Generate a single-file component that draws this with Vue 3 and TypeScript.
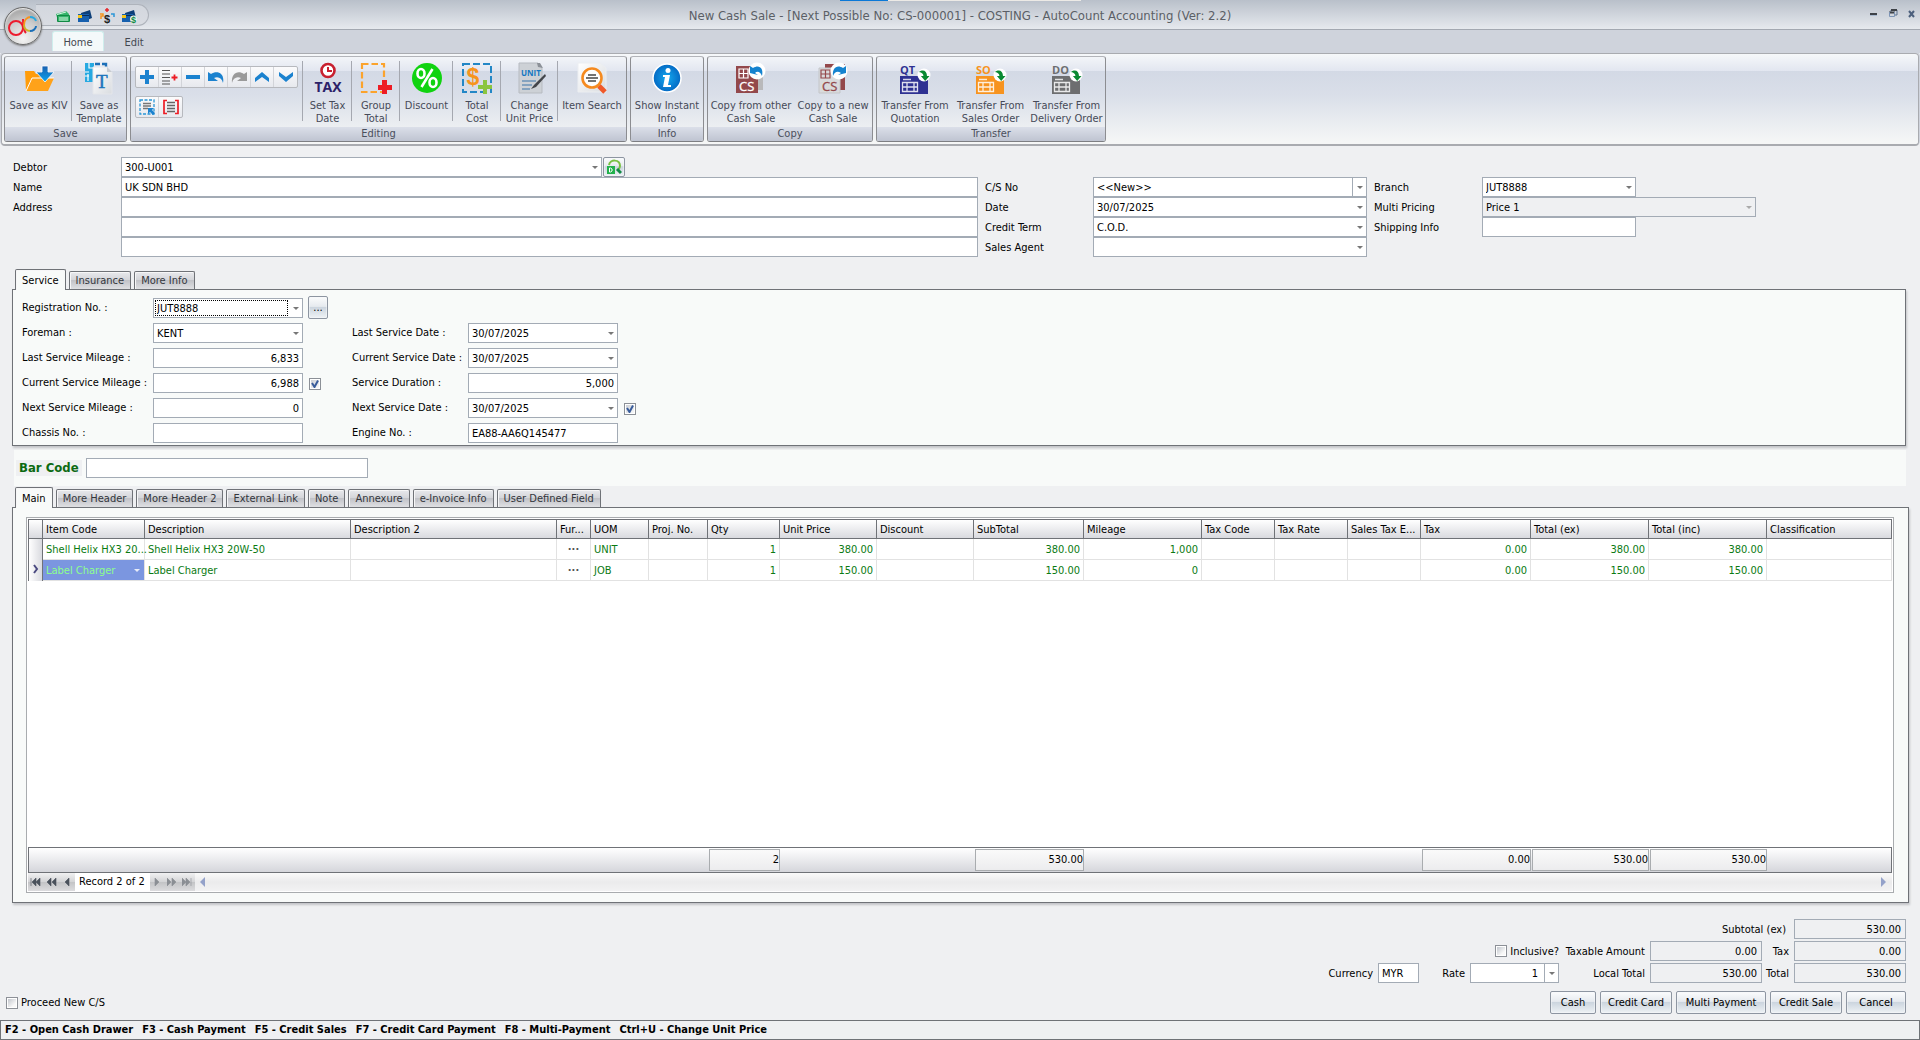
<script setup lang="ts">
import { ref } from 'vue'

interface RibbonButton {
  lines: string[]
  icon: string
  width: number
  divider?: boolean
}
interface RibbonGroup {
  caption: string
  tools?: boolean
  buttons: RibbonButton[]
}
interface Column {
  title: string
  key: string
  width: number
  numeric?: boolean
  total?: string
}
interface ServiceField {
  id: string
  label: string
  value: string
  kind: 'select' | 'text' | 'number'
  focused?: boolean
  more?: boolean
  check?: string
}

const sheet = '<defs><linearGradient id="sheetFill" x1="0" y1="0" x2="1" y2="1"><stop offset="0" stop-color="#ffffff"/><stop offset="1" stop-color="#d9dce0"/></linearGradient></defs>'
const copyArrow = '<circle cx="22" cy="9" r="8.5" fill="#fff"/>'
const transferDoc = (tag: string, color: string): string =>
  `<rect x="1" y="14" width="28" height="18" fill="${color}"/>
   <path d="M4 17.5h8" stroke="#fff" stroke-width="1.5" opacity=".8"/>
   <path d="M3.5 20.5h15v9h-15zM3.5 25h15M8 20.5v9M15 20.5v9" fill="none" stroke="#fff" stroke-width="1.3" opacity=".85"/>
   <circle cx="25" cy="13" r="6.5" fill="#fff"/>
   <path d="M20 10c4-3 8-1 8 4h2.500l-4.300 5-4.300-5h2.500c0-2-1.500-3.500-4.400-4z" fill="#0a8a32"/>
   <text x="1" y="12" font-size="11" font-weight="bold" fill="${color}" font-family="Open Sans, Noto Sans, sans-serif">${tag}</text>`

const icons: Record<string, string> = {
  kiv: `<defs><linearGradient id="kivArrow" x1="0" y1="0" x2="0" y2="1"><stop offset="0" stop-color="#1a5fb0"/><stop offset="1" stop-color="#0aa4ee"/></linearGradient></defs>
    <path d="M2 9h9l2 3h12v5H9L3 29z" fill="#ff9c0a"/><path d="M9 16h22l-6 13H3z" fill="#ffa21a"/><path d="M3 29 9 16h22" fill="none" stroke="#fff" stroke-width="1"/>
    <path d="M19 4h6v6h6l-9 10-9-10h6z" fill="url(#kivArrow)" stroke="#fff" stroke-width=".8"/>`,
  template: `${sheet}<path d="M2 1h9v4h4v3h-4v12H2z" fill="#27a9e1"/><path d="M6 1v5h5M2 10h4M2 14h4M5 12v7" stroke="#fff" stroke-width="1.2" fill="none"/><path d="M12 2h5M19 2h4v4" stroke="#1c6fb8" stroke-width="2.4" fill="none"/>
    <path d="M10 5h14l5 5v22H10z" fill="url(#sheetFill)" stroke="#e4e6ea"/><path d="M24 5l5 5h-5z" fill="#c5cad2"/>
    <text x="13" y="26" font-size="19" fill="#1b75bc" stroke="#1b75bc" stroke-width=".5" font-family="Liberation Serif, serif">T</text>`,
  tax: `<circle cx="16" cy="8.5" r="6.5" fill="#fff" stroke="#c8202f" stroke-width="2.6"/><path d="M16 5v4h4" fill="none" stroke="#c8202f" stroke-width="2"/>
    <text x="16" y="30" font-size="14" font-weight="bold" text-anchor="middle" fill="#2b2168" font-family="Open Sans, Noto Sans, sans-serif">TAX</text>`,
  group: `<rect x="2" y="2" width="22" height="28" fill="none" stroke="#fba32c" stroke-width="2.2" stroke-dasharray="6.5 3"/>
    <path d="M22 18h5v5h5v5h-5v4h-5v-4h-4v-5h4z" fill="#ed1c24"/>`,
  discount: `<circle cx="16" cy="16" r="15" fill="#10d310"/><g fill="none" stroke="#fff" stroke-width="2.6"><ellipse cx="10" cy="11.5" rx="3.5" ry="4.5"/><ellipse cx="22" cy="20.5" rx="3.5" ry="4.5"/><path d="M21.5 7l-11 18"/></g>`,
  cost: `<rect x="2" y="2" width="28" height="28" fill="none" stroke="#2387c6" stroke-width="2" stroke-dasharray="7 3"/>
    <text x="12" y="23" font-size="23" font-weight="bold" text-anchor="middle" fill="#f7941d" font-family="Liberation Sans, sans-serif">$</text>
    <path d="M22 18h4v5h5v4h-5v5h-4v-5h-5v-4h5z" fill="#8bc53f"/>`,
  unit: `<path d="M5 1h19l4 5v25H5z" fill="#cdd1d6" stroke="#b7bbc1"/><path d="M23 1h3l3 5-5-1z" fill="#8c9198"/>
    <text x="7" y="14" font-size="8" font-weight="bold" fill="#1577c2" font-family="Open Sans, sans-serif">UNIT</text>
    <path d="M8 19h14M8 23h10M8 27h8" stroke="#6b93b8" stroke-width="1.3"/><path d="M31 12 20 23l-3 4 5-2 10-11z" fill="#43464b"/>`,
  search: `${sheet}<path d="M2 1h22l6 5v24H2z" fill="url(#sheetFill)" stroke="#eceef1"/>
    <circle cx="16" cy="16" r="9.5" fill="#fdfdfd" stroke="#f58a1f" stroke-width="2.6"/><path d="M23 24l6 6" stroke="#f0592a" stroke-width="5"/><path d="M12 13h8M10 16h12M12 19h8" stroke="#444" stroke-width="1.6"/>`,
  info: `<defs><radialGradient id="infoFill"><stop offset="0" stop-color="#14a9ee"/><stop offset="1" stop-color="#0469c4"/></radialGradient></defs>
    <circle cx="16" cy="16" r="14" fill="url(#infoFill)" stroke="#fff" stroke-width="1.5"/><circle cx="17" cy="8.5" r="2.5" fill="#fff"/><path d="M12 13h7l-2 10h3v2h-8l2-10h-2z" fill="#fff"/>`,
  copyOther: `<path d="M8 4h20v24H8z" fill="#b9b9bb"/><path d="M1 4h22v27H1z" fill="#93484b"/><path d="M4 7h9v9H4zM4 11.5h9M8.5 7v9" fill="none" stroke="#fff" stroke-width="1.2"/>
    <text x="4" y="29" font-size="13" fill="#fff" stroke="#fff" stroke-width=".3" font-family="Open Sans, sans-serif">CS</text>${copyArrow}<path d="M15 11V4l3 2c6-4 11 0 9 8-2-5-5-5-7-3l3 2z" fill="#1583cf"/>`,
  copyNew: `<path d="M8 2h20v26H8z" fill="#93484b"/><path d="M2 6h21v25H2z" fill="#d9dadc" stroke="#c4c6c9"/><path d="M4 8h9v8H4zM4 12h9M8.5 8v8" fill="none" stroke="#93484b" stroke-width="1.2"/>
    <text x="5" y="29" font-size="13" fill="#93484b" stroke="#93484b" stroke-width=".3" font-family="Open Sans, sans-serif">CS</text>${copyArrow}<path d="M29 11V4l-3 2c-6-4-11 0-10 8 2-5 5-5 8-3l-3 2z" fill="#1583cf"/>`,
  qt: transferDoc('QT', '#2e3192'),
  so: transferDoc('SO', '#f7931e'),
  do: transferDoc('DO', '#6d6e70'),
}

const groups: RibbonGroup[] = [
  {
    caption: 'Save',
    buttons: [
      { lines: ['Save as KIV'], icon: 'kiv', width: 67, divider: true },
      { lines: ['Save as', 'Template'], icon: 'template', width: 54 },
    ],
  },
  {
    caption: 'Editing',
    tools: true,
    buttons: [
      { lines: ['Set Tax', 'Date'], icon: 'tax', width: 49, divider: true },
      { lines: ['Group', 'Total'], icon: 'group', width: 48, divider: true },
      { lines: ['Discount'], icon: 'discount', width: 53, divider: true },
      { lines: ['Total', 'Cost'], icon: 'cost', width: 48, divider: true },
      { lines: ['Change', 'Unit Price'], icon: 'unit', width: 57, divider: true },
      { lines: ['Item Search'], icon: 'search', width: 68 },
    ],
  },
  { caption: 'Info', buttons: [{ lines: ['Show Instant', 'Info'], icon: 'info', width: 72 }] },
  {
    caption: 'Copy',
    buttons: [
      { lines: ['Copy from other', 'Cash Sale'], icon: 'copyOther', width: 86 },
      { lines: ['Copy to a new', 'Cash Sale'], icon: 'copyNew', width: 78 },
    ],
  },
  {
    caption: 'Transfer',
    buttons: [
      { lines: ['Transfer From', 'Quotation'], icon: 'qt', width: 76 },
      { lines: ['Transfer From', 'Sales Order'], icon: 'so', width: 75 },
      { lines: ['Transfer From', 'Delivery Order'], icon: 'do', width: 77 },
    ],
  },
]

const blue = '#1b82cf'
const topTools = [
  { name: 'Add row', svg: `<path d="M6 1h4v5h5v4h-5v5H6v-5H1V6h5z" fill="${blue}"/>` },
  { name: 'Insert row', svg: '<path d="M0 1.5h8M0 5h8M0 8.5h8M0 12h8M0 15h8" stroke="#555" stroke-width="1.2"/><path d="M12.5 5.5v6M9.5 8.5h6" stroke="#ed1c24" stroke-width="1.8"/>' },
  { name: 'Delete row', svg: `<path d="M1 6h14v4H1z" fill="${blue}"/>` },
  { name: 'Undo', svg: `<path d="M0 12V3l3 2c6-4 14-1 12 9-1-5-5-7-9-5l4 3z" fill="${blue}"/>` },
  { name: 'Redo', svg: '<path d="M16 12V3l-3 2C7 1 0 4 1 14c1-5 5-7 9-5l-4 3z" fill="#9a9a9a"/>' },
  { name: 'Move up', svg: `<path d="M1 13V9l7-6 7 6v4L8 8z" fill="${blue}"/>` },
  { name: 'Move down', svg: `<path d="M1 3v4l7 6 7-6V3L8 8z" fill="${blue}"/>` },
]
const lowTools = [
  { name: 'Select rows', svg: `<rect x="1" y="1" width="14" height="14" fill="none" stroke="#2b97d6" stroke-width="1.3" stroke-dasharray="3 1.5"/><path d="M4 4.5h8M4 7h8M4 9.5h5" stroke="#777" stroke-width="1.3"/><path d="M9 9h6l-2 2 3 3-2 2-3-3-2 2z" fill="${blue}"/>` },
  { name: 'Select all', svg: '<path d="M4 1.5H1v13h3M12 1.5h3v13h-3" fill="none" stroke="#ed1c24" stroke-width="1.7"/><path d="M4 3.5h8M4 6.5h8M4 9.5h8M4 12.5h8" stroke="#666" stroke-width="1.3"/>' },
]
const card = '<path d="M4 5 13 2l2 8-10 4z" fill="#0d3f78"/><path d="M1 6h11v8H1z" fill="#1660ae"/><path d="M1 7.5h11" stroke="#0a2d58" stroke-width="1"/><path d="M1 7h4v3H1z" fill="#f5c518"/>'
const quickTools = [
  { name: 'Cash drawer', svg: '<path d="M1 6 11 3l3 3v7H3z" fill="#35b56b"/><path d="M2 6.5 11 4M4 10h9M4 12h9" stroke="#d8f5e3" stroke-width="1"/><path d="M2.5 7.5h12v6h-12z" fill="none" stroke="#128a45"/>' },
  { name: 'Cards', svg: card },
  { name: 'Split payment', svg: '<text x="8" y="15" font-size="11" font-weight="bold" text-anchor="middle" fill="#222" font-family="Liberation Sans, sans-serif">$</text><path d="M8 0v4M6 2h4" stroke="#e5252a" stroke-width="1.5"/><path d="M1 6h3v2H2v3" fill="none" stroke="#f7941d" stroke-width="1.5"/><path d="M12 6h3v3" fill="none" stroke="#2b97d6" stroke-width="1.5"/>' },
  { name: 'Card payment', svg: card + '<circle cx="12.5" cy="11" r="3.5" fill="#e8f5ea"/><text x="12.5" y="15" font-size="9" font-weight="bold" text-anchor="middle" fill="#128a45" font-family="Liberation Sans, sans-serif">$</text>' },
]

const debtor = ref('300-U001')
const debtorName = ref('UK SDN BHD')

const docFields = [
  { id: 'csNo', label: 'C/S No', value: '<<New>>', split: true },
  { id: 'docDate', label: 'Date', value: '30/07/2025', split: false },
  { id: 'term', label: 'Credit Term', value: 'C.O.D.', split: false },
  { id: 'agent', label: 'Sales Agent', value: '', split: false },
]

const serviceTabs = ['Service', 'Insurance', 'More Info']
const serviceTab = ref('Service')
const serviceColumns: ServiceField[][] = [
  [
    { id: 'regNo', label: 'Registration No. :', value: 'JUT8888', kind: 'select', focused: true, more: true },
    { id: 'foreman', label: 'Foreman :', value: 'KENT', kind: 'select' },
    { id: 'lastMileage', label: 'Last Service Mileage :', value: '6,833', kind: 'number' },
    { id: 'curMileage', label: 'Current Service Mileage :', value: '6,988', kind: 'number', check: 'Update current mileage' },
    { id: 'nextMileage', label: 'Next Service Mileage :', value: '0', kind: 'number' },
    { id: 'chassis', label: 'Chassis No. :', value: '', kind: 'text' },
  ],
  [
    { id: 'lastDate', label: 'Last Service Date :', value: '30/07/2025', kind: 'select' },
    { id: 'curDate', label: 'Current Service Date :', value: '30/07/2025', kind: 'select' },
    { id: 'duration', label: 'Service Duration :', value: '5,000', kind: 'number' },
    { id: 'nextDate', label: 'Next Service Date :', value: '30/07/2025', kind: 'select', check: 'Update next service date' },
    { id: 'engine', label: 'Engine No. :', value: 'EA88-AA6Q145477', kind: 'text' },
  ],
]

const detailTabs = ['Main', 'More Header', 'More Header 2', 'External Link', 'Note', 'Annexure', 'e-Invoice Info', 'User Defined Field']
const detailTab = ref('Main')

const columns: Column[] = [
  { title: 'Item Code', key: 'code', width: 102 },
  { title: 'Description', key: 'desc', width: 206 },
  { title: 'Description 2', key: 'desc2', width: 206 },
  { title: 'Fur...', key: 'more', width: 34 },
  { title: 'UOM', key: 'uom', width: 58 },
  { title: 'Proj. No.', key: 'proj', width: 59 },
  { title: 'Qty', key: 'qty', width: 72, numeric: true, total: '2' },
  { title: 'Unit Price', key: 'price', width: 97, numeric: true },
  { title: 'Discount', key: 'discount', width: 97 },
  { title: 'SubTotal', key: 'subtotal', width: 110, numeric: true, total: '530.00' },
  { title: 'Mileage', key: 'mileage', width: 118, numeric: true },
  { title: 'Tax Code', key: 'taxCode', width: 73 },
  { title: 'Tax Rate', key: 'taxRate', width: 73 },
  { title: 'Sales Tax E...', key: 'exempt', width: 73 },
  { title: 'Tax', key: 'tax', width: 110, numeric: true, total: '0.00' },
  { title: 'Total (ex)', key: 'totalEx', width: 118, numeric: true, total: '530.00' },
  { title: 'Total (inc)', key: 'totalInc', width: 118, numeric: true, total: '530.00' },
  { title: 'Classification', key: 'classification', width: 0 },
]
const rows: Record<string, string>[] = [
  { code: 'Shell Helix HX3 20...', desc: 'Shell Helix HX3 20W-50', more: '···', uom: 'UNIT', qty: '1', price: '380.00', subtotal: '380.00', mileage: '1,000', tax: '0.00', totalEx: '380.00', totalInc: '380.00' },
  { code: 'Label Charger', desc: 'Label Charger', more: '···', uom: 'JOB', qty: '1', price: '150.00', subtotal: '150.00', mileage: '0', tax: '0.00', totalEx: '150.00', totalInc: '150.00' },
]
const current = ref(1)

const navBack = [
  { name: 'First', d: 'M1 1v8M6 1v8L2 5zM10 1v8L6 5z' },
  { name: 'Previous page', d: 'M5 1v8L1 5zM10 1v8L6 5z' },
  { name: 'Previous', d: 'M7 1v8L3 5z' },
]
const navNext = [
  { name: 'Next', d: 'M3 1v8l4-4z' },
  { name: 'Next page', d: 'M0 1v8l4-4zM5 1v8l4-4z' },
  { name: 'Last', d: 'M0 1v8l4-4zM4 1v8l4-4zM9 1v8' },
]
const payButtons = [
  { label: 'Cash', size: 'small' },
  { label: 'Credit Card', size: 'medium' },
  { label: 'Multi Payment', size: 'large' },
  { label: 'Credit Sale', size: 'medium' },
  { label: 'Cancel', size: 'regular' },
]
const shortcuts = ['F2 - Open Cash Drawer', 'F3 - Cash Payment', 'F5 - Credit Sales', 'F7 - Credit Card Payment', 'F8 - Multi-Payment', 'Ctrl+U - Change Unit Price']
</script>

<template>
  <div class="window">
    <header class="titlebar">
      <div class="quick">
        <button v-for="t in quickTools" :key="t.name" class="bare" :aria-label="t.name">
          <svg width="16" height="16" viewBox="0 0 16 16" v-html="t.svg"></svg>
        </button>
      </div>
      <h1>New Cash Sale - [Next Possible No: CS-000001] - COSTING - AutoCount Accounting (Ver: 2.2)</h1>
      <div class="controls">
        <button class="bare" aria-label="Minimize"><svg width="10" height="10" viewBox="0 0 10 10"><path d="M1 5h7" stroke="#3e4248" stroke-width="2" /><path d="M1 6.5h7" stroke="#a9bad0" /></svg></button>
        <button class="bare" aria-label="Restore"><svg width="10" height="10" viewBox="0 0 10 10"><path d="M3 3V1h6v5H7" fill="none" stroke="#5d708c" /><path d="M3 1h6M1 3.5h6" stroke="#3e4248" stroke-width="2" /><path d="M1.5 3v4.5h5V3" fill="none" stroke="#7d94b5" /></svg></button>
        <button class="bare" aria-label="Close"><svg width="10" height="10" viewBox="0 0 10 10"><path d="M2 2l5 6M7 2 2 8" stroke="#4d607d" stroke-width="2" /></svg></button>
      </div>
      <button class="orb" aria-label="Application menu">
        <svg width="30" height="22" viewBox="0 0 30 22">
          <g fill="none" stroke-width="2">
            <circle cx="8" cy="13" r="7" stroke="#ed1c2e" />
            <path d="M15 4c0 6 0 11 3 14" stroke="#ed1c2e" />
            <path d="M16 10c0-5 3-8 7-8" stroke="#f7941d" />
            <path d="M22 2c3 0 5 1 6 4" stroke="#27a9e1" />
            <path d="M16 10c0 4 3 6 7 6" stroke="#c9b52a" />
            <path d="M22 16c3 0 6-2 6-5" stroke="#1b6fb8" />
          </g>
        </svg>
      </button>
    </header>

    <nav class="ribbon-tabs">
      <button class="ribbon-tab active">Home</button>
      <button class="ribbon-tab">Edit</button>
    </nav>

    <section class="ribbon">
      <div v-for="g in groups" :key="g.caption" class="group">
        <div class="group-body">
          <div v-if="g.tools" class="tools">
            <div class="toolbox">
              <button v-for="t in topTools" :key="t.name" class="tool" :aria-label="t.name">
                <svg width="16" height="16" viewBox="0 0 16 16" v-html="t.svg"></svg>
              </button>
            </div>
            <div class="toolbox">
              <button v-for="t in lowTools" :key="t.name" class="tool" :aria-label="t.name">
                <svg width="16" height="16" viewBox="0 0 16 16" v-html="t.svg"></svg>
              </button>
            </div>
          </div>
          <button
            v-for="b in g.buttons"
            :key="b.icon"
            class="ribbon-button"
            :class="{ divider: b.divider }"
            :style="{ width: b.width + 'px' }"
          >
            <svg width="32" height="32" viewBox="0 0 32 32" v-html="icons[b.icon]"></svg>
            <span v-for="line in b.lines" :key="line">{{ line }}</span>
          </button>
        </div>
        <div class="caption">{{ g.caption }}</div>
      </div>
    </section>

    <main class="content">
      <section class="head">
        <div class="head-left">
          <div class="head-row">
            <label for="debtor">Debtor</label>
            <span class="combo debtor">
              <select id="debtor" v-model="debtor"><option>300-U001</option></select>
            </span>
            <button class="find" aria-label="Find debtor">
              <svg width="16" height="16" viewBox="0 0 16 16"><path d="M3 6c1-6 11-6 11 1 0 2-1 3-2 4" fill="none" stroke="#7ac143" stroke-width="2" /><path d="M11 10l4 4" stroke="#128a45" stroke-width="3" /><path d="M1 7h8v8H1z" fill="#22b14c" /><path d="M3.5 9v4h1l1.500-1v-2l-1.500-1z" fill="none" stroke="#fff" /></svg>
            </button>
          </div>
          <div class="head-row">
            <label for="name">Name</label>
            <input id="name" v-model="debtorName" class="box grow" type="text" />
          </div>
          <div class="head-row">
            <label for="addr1">Address</label>
            <input id="addr1" class="box grow" type="text" />
          </div>
          <div class="head-row">
            <label for="addr2"></label>
            <input id="addr2" class="box grow" type="text" aria-label="Address line 2" />
          </div>
          <div class="head-row">
            <label for="addr3"></label>
            <input id="addr3" class="box grow" type="text" aria-label="Address line 3" />
          </div>
        </div>
        <div class="head-mid">
          <div v-for="f in docFields" :key="f.id" class="head-row">
            <label :for="f.id">{{ f.label }}</label>
            <span class="combo grow" :class="{ split: f.split }">
              <select :id="f.id"><option>{{ f.value }}</option></select>
            </span>
          </div>
        </div>
        <div class="head-right">
          <div class="head-row">
            <label for="branch">Branch</label>
            <span class="combo branch"><select id="branch"><option>JUT8888</option></select></span>
          </div>
          <div class="head-row">
            <label for="pricing">Multi Pricing</label>
            <span class="combo pricing muted"><select id="pricing" disabled><option>Price 1</option></select></span>
          </div>
          <div class="head-row">
            <label for="shipping">Shipping Info</label>
            <input id="shipping" class="box branch" type="text" />
          </div>
        </div>
      </section>

      <section class="service">
        <div class="tabs">
          <button v-for="t in serviceTabs" :key="t" class="tab" :class="{ active: t === serviceTab }" @click="serviceTab = t">{{ t }}</button>
        </div>
        <div class="panel service-panel">
          <div v-for="(col, c) in serviceColumns" :key="c" class="service-col" :class="c ? 'dates' : 'mileage'">
            <div v-for="f in col" :key="f.id" class="service-row">
              <label :for="f.id">{{ f.label }}</label>
              <span v-if="f.kind === 'select'" class="combo field" :class="{ focused: f.focused }">
                <select :id="f.id"><option>{{ f.value }}</option></select>
              </span>
              <input v-else :id="f.id" class="box field" :class="{ number: f.kind === 'number' }" type="text" :value="f.value" />
              <button v-if="f.more" class="push more" aria-label="Browse vehicles">...</button>
              <input v-if="f.check" class="tick" type="checkbox" checked :aria-label="f.check" />
            </div>
          </div>
        </div>
      </section>

      <section class="barcode">
        <label for="barcode">Bar Code</label>
        <input id="barcode" class="box" type="text" />
      </section>

      <section class="details">
        <div class="tabs">
          <button v-for="t in detailTabs" :key="t" class="tab" :class="{ active: t === detailTab }" @click="detailTab = t">{{ t }}</button>
        </div>
        <div class="panel details-panel">
          <div class="grid">
            <table class="lines">
              <colgroup>
                <col class="indicator" />
                <col v-for="c in columns" :key="c.key" :style="c.width ? { width: c.width + 'px' } : {}" />
              </colgroup>
              <thead>
                <tr>
                  <th></th>
                  <th v-for="c in columns" :key="c.key">{{ c.title }}</th>
                </tr>
              </thead>
              <tbody>
                <tr v-for="(r, i) in rows" :key="i" @click="current = i">
                  <th scope="row"><svg v-if="i === current" width="6" height="10" viewBox="0 0 6 10"><path d="M1 1l3 4-3 4" fill="none" stroke="#4a4a80" stroke-width="2" /></svg></th>
                  <td
                    v-for="c in columns"
                    :key="c.key"
                    :class="{ number: c.numeric, dots: c.key === 'more', chosen: i === current && c.key === 'code' }"
                  >{{ r[c.key] || '' }}</td>
                </tr>
              </tbody>
            </table>
            <div class="blank"></div>
            <table class="totals">
              <colgroup>
                <col class="indicator" />
                <col v-for="c in columns" :key="c.key" :style="c.width ? { width: c.width + 'px' } : {}" />
              </colgroup>
              <tbody>
                <tr>
                  <td></td>
                  <td v-for="c in columns" :key="c.key"><div v-if="c.total" class="sum">{{ c.total }}</div></td>
                </tr>
              </tbody>
            </table>
            <div class="navigator">
              <div class="nav-buttons">
                <button v-for="n in navBack" :key="n.name" class="bare" :aria-label="n.name">
                  <svg width="11" height="10" viewBox="0 0 11 10"><path :d="n.d" fill="#4a525c" stroke="#4a525c" stroke-width=".6" /></svg>
                </button>
              </div>
              <span class="record">Record 2 of 2</span>
              <div class="nav-buttons off">
                <button v-for="n in navNext" :key="n.name" class="bare" :aria-label="n.name">
                  <svg width="11" height="10" viewBox="0 0 11 10"><path :d="n.d" fill="#8b8f94" stroke="#8b8f94" stroke-width=".6" /></svg>
                </button>
              </div>
              <div class="scroll">
                <svg width="6" height="10" viewBox="0 0 6 10"><path d="M5 0v10L0 5z" fill="#93a1c9" /></svg>
                <svg width="6" height="10" viewBox="0 0 6 10"><path d="M0 0v10l5-5z" fill="#93a1c9" /></svg>
              </div>
            </div>
          </div>
        </div>
      </section>

      <section class="summary">
        <div class="sum-row">
          <label for="subEx" class="pad">Subtotal (ex)</label>
          <input id="subEx" class="box number gray amount" type="text" value="530.00" readonly />
        </div>
        <div class="sum-row">
          <label class="check"><input class="tick" type="checkbox" />Inclusive?</label>
          <label for="taxable" class="taxable">Taxable Amount</label>
          <input id="taxable" class="box number gray amount" type="text" value="0.00" readonly />
          <label for="tax" class="short">Tax</label>
          <input id="tax" class="box number gray amount" type="text" value="0.00" readonly />
        </div>
        <div class="sum-row">
          <label for="currency">Currency</label>
          <input id="currency" class="box currency" type="text" value="MYR" />
          <label for="rate" class="rate-label">Rate</label>
          <span class="combo split rate"><select id="rate"><option>1</option></select></span>
          <label for="localTotal" class="taxable">Local Total</label>
          <input id="localTotal" class="box number gray amount" type="text" value="530.00" readonly />
          <label for="total" class="short">Total</label>
          <input id="total" class="box number gray amount" type="text" value="530.00" readonly />
        </div>
      </section>

      <section class="actions">
        <label class="check"><input class="tick" type="checkbox" />Proceed New C/S</label>
        <div class="pay">
          <button v-for="b in payButtons" :key="b.label" class="push" :class="b.size">{{ b.label }}</button>
        </div>
      </section>
    </main>

    <footer class="status">
      <span v-for="s in shortcuts" :key="s">{{ s }}</span>
    </footer>
  </div>
</template>

<style>
body {
  margin: 0;
  background: #eff0f2;
}
</style>

<style scoped>
* {
  box-sizing: border-box;
}
.window {
  display: flex;
  flex-direction: column;
  min-height: 100vh;
  background: #eff0f2;
  color: #000;
  font: 11px/13px "DejaVu Sans Condensed", "DejaVu Sans", sans-serif;
}
button,
input,
select {
  font: inherit;
  color: inherit;
  margin: 0;
}
.bare {
  display: flex;
  padding: 0;
  border: 0;
  background: none;
}

/* title bar */
.titlebar {
  position: relative;
  display: flex;
  align-items: flex-start;
  justify-content: space-between;
  height: 30px;
  background: linear-gradient(#b9c0ca, #e6e9ee);
  border-bottom: 1px solid #a3a8b1;
}
.titlebar::after {
  content: "";
  position: absolute;
  top: 0;
  left: 840px;
  width: 241px;
  height: 1px;
  background: linear-gradient(90deg, #0a78d7 48px, #eceae6 48px);
}
.quick {
  display: flex;
  gap: 6px;
  width: 113px;
  height: 22px;
  margin: 4px 0 0 36px;
  padding: 3px 10px 0 19px;
  border: 1px solid #aeb3bb;
  border-radius: 0 11px 11px 0;
  border-left: 0;
  background: linear-gradient(#d3d7de, #d9dce2);
}
.titlebar h1 {
  margin: 0;
  font-size: 13px;
  font-weight: normal;
  line-height: 32px;
  color: #5b5f66;
}
.controls {
  display: flex;
  gap: 9px;
  width: 149px;
  padding: 9px 3px 0 0;
  justify-content: flex-end;
}
.orb {
  position: absolute;
  left: 4px;
  top: 7px;
  z-index: 2;
  display: grid;
  place-items: center;
  width: 38px;
  height: 38px;
  padding: 0;
  border: 1px solid #6a6a6a;
  border-radius: 50%;
  background: radial-gradient(circle at 50% 85%, #f4f4f4, #cccccc 50%, #8f8f8f);
  box-shadow: inset 0 1px 2px #fff, 0 1px 2px #777;
}

/* ribbon */
.ribbon-tabs {
  display: flex;
  gap: 4px;
  height: 23px;
  padding: 1px 0 0 52px;
  background: #cfd3dc;
}
.ribbon-tab {
  width: 52px;
  padding: 0;
  border: 1px solid transparent;
  border-bottom: 0;
  border-radius: 3px 3px 0 0;
  background: none;
  color: #444850;
}
.ribbon-tab.active {
  border-color: #cfeeed;
  background: #f4f9fa;
}
.ribbon {
  display: flex;
  gap: 3px;
  height: 93px;
  padding: 2px;
  border: 1px solid #a9abb0;
  border-bottom-width: 2px;
  border-radius: 4px;
  margin: 0 1px;
  background: linear-gradient(#f6f8fa, #e2e6f0 17px, #d3d9e5 17px, #dadfe9 42px, #f5f6f6 88px);
  box-shadow: 0 -1px 0 1px #cfd3dc;
}
.group {
  display: flex;
  flex-direction: column;
  height: 86px;
  border: 1px solid #95979c;
  border-color: #b2b4b9 #8c8d91 #7d7e82 #8c8d91;
  border-radius: 3px;
  overflow: hidden;
}
.group-body {
  display: flex;
  flex: 1;
}
.caption {
  height: 14px;
  line-height: 14px;
  text-align: center;
  color: #4b4f5c;
  background: linear-gradient(#dbdfe9, #bfc4d1);
}
.tools {
  position: relative;
  display: flex;
  flex-direction: column;
  align-items: flex-start;
  gap: 8px;
  width: 172px;
  padding: 9px 4px 0;
}
.toolbox {
  display: flex;
  height: 22px;
  border: 1px solid #b7b9be;
  border-radius: 2px;
  background: linear-gradient(#fbfbfc, #e7e9ee);
}
.tool {
  display: grid;
  place-items: center;
  width: 23px;
  padding: 0;
  border: 0;
  border-right: 1px solid #d2d4d9;
  background: none;
}
.tool:last-child {
  border-right: 0;
}
.ribbon-button {
  position: relative;
  display: flex;
  flex-direction: column;
  align-items: center;
  padding: 5px 0 0;
  border: 0;
  background: none;
  color: #464a58;
  line-height: 13px;
  white-space: nowrap;
}
.ribbon-button svg {
  flex: none;
  margin-bottom: 5px;
  overflow: visible;
}
.divider::after,
.tools::after {
  content: "";
  position: absolute;
  right: 0;
  top: 4px;
  width: 1px;
  height: 60px;
  background: #a5a8b0;
}

/* fields */
.box,
.combo {
  display: block;
  height: 20px;
  border: 1px solid #a3abb5;
  background: #fff;
  border-radius: 0;
}
.box {
  padding: 0 3px;
  outline: 0;
  min-width: 0;
}
.combo {
  position: relative;
}
.combo select {
  display: block;
  width: 100%;
  height: 18px;
  padding: 0 16px 0 3px;
  border: 0;
  outline: 0;
  appearance: none;
  background: none;
}
.combo::after {
  content: "";
  position: absolute;
  right: 3px;
  top: 8px;
  border: 3px solid transparent;
  border-top-color: #777;
  border-bottom: 0;
  pointer-events: none;
}
.combo.split::before {
  content: "";
  position: absolute;
  right: 13px;
  top: 0;
  width: 1px;
  height: 18px;
  background: #a3abb5;
}
.muted {
  background: #eff0f2;
}
.muted select {
  opacity: 1;
  color: #000;
}
.muted::after {
  border-top-color: #aaa;
}
.number {
  text-align: right;
}
.gray {
  background: #eff0f2;
}
.grow {
  flex: 1;
}
.push,
.find {
  padding: 0;
  border: 1px solid #8d95a1;
  border-radius: 2px;
  background: linear-gradient(#fbfcfd, #e6eaef 45%, #cbd4de 48%, #eef2f5);
  box-shadow: inset 0 0 0 1px #f6f8fa88;
}
.tick {
  appearance: none;
  flex: none;
  width: 12px;
  height: 12px;
  border: 1px solid #8c9097;
  background: linear-gradient(135deg, #b9bec6, #f8f8f8 70%);
  box-shadow: inset 0 0 0 1px #fff;
}
.tick:checked {
  background: url("data:image/svg+xml,%3Csvg xmlns='http://www.w3.org/2000/svg' viewBox='0 0 10 10'%3E%3Cpath d='M2 4l2.500 4L8 1.500' fill='none' stroke='%23395c9b' stroke-width='2'/%3E%3C/svg%3E"), linear-gradient(135deg, #c6cad1, #fff);
}
.check {
  display: flex;
  align-items: center;
  gap: 3px;
}

/* document header */
.content {
  display: flex;
  flex: 1;
  flex-direction: column;
  padding: 11px 12px 5px;
}
.head {
  display: flex;
  height: 112px;
}
.head-row {
  display: flex;
  align-items: center;
  height: 20px;
}
.head-left {
  flex: 1;
  min-width: 0;
}
.head-left label {
  width: 109px;
  padding-left: 1px;
}
.debtor {
  width: 481px;
}
.find {
  display: grid;
  place-items: center;
  width: 22px;
  height: 20px;
  margin-left: 1px;
}
.head-mid {
  width: 389px;
  padding: 20px 0 0 7px;
}
.head-mid label {
  width: 108px;
}
.head-right {
  width: 541px;
  padding: 20px 0 0 7px;
}
.head-right label {
  width: 108px;
}
.branch {
  width: 154px;
}
.pricing {
  width: 274px;
}

/* tab pages */
.tabs {
  display: flex;
  align-items: flex-end;
  gap: 3px;
  height: 20px;
  padding-left: 3px;
}
.tab {
  height: 18px;
  padding: 0 6px;
  border: 1px solid #6f7277;
  border-bottom: 0;
  border-radius: 2px 2px 0 0;
  background: linear-gradient(#e8e9ec, #d5d6da 45%, #c2c3c8 50%, #dfe0e3);
  color: #33363c;
  box-shadow: inset 1px 1px 0 #f6f6f7;
}
.tab.active {
  position: relative;
  height: 21px;
  margin-bottom: -1px;
  background: #f8faf9;
  color: #000;
}
.panel {
  border: 1px solid #6f7277;
  background: #f8faf9;
  box-shadow: 1px 2px 2px #c4c5c8;
}
.service-panel {
  display: flex;
  height: 157px;
  margin: 0 2px 0 0;
  padding-left: 9px;
}
.service-col {
  display: flex;
  flex-direction: column;
  gap: 5px;
  padding-top: 8px;
}
.service-row {
  display: flex;
  align-items: center;
  height: 20px;
}
.service-row label {
  width: 131px;
  padding-bottom: 2px;
  white-space: nowrap;
}
.mileage {
  width: 330px;
}
.dates {
  padding-top: 33px;
}
.dates label {
  width: 116px;
}
.field {
  width: 150px;
}
.focused::before {
  content: "";
  position: absolute;
  inset: 1px 14px 1px 1px;
  border: 1px dotted #000;
  pointer-events: none;
}
.more {
  width: 20px;
  height: 23px;
  margin: 0 0 2px 5px;
}
.service-row .tick {
  margin: 2px 0 0 6px;
}
.barcode {
  display: flex;
  align-items: center;
  height: 36px;
  margin: 4px 2px 1px;
  padding-left: 2px;
  background: #f8faf9;
}
.barcode label {
  width: 66px;
  margin-right: 4px;
  padding-left: 3px;
  font-size: 13px;
  font-weight: bold;
  line-height: 16px;
  color: #0c6a12;
  background: #eff0f2;
  white-space: nowrap;
}
.barcode .box {
  width: 282px;
}

/* detail lines */
.details {
  display: flex;
  flex: 1;
  flex-direction: column;
}
.details-panel {
  display: flex;
  flex: 1;
  padding: 9px 14px 9px 13px;
  margin-right: -1px;
}
.grid {
  display: flex;
  flex: 1;
  flex-direction: column;
  min-width: 0;
  padding: 1px;
  border: 1px solid #a9acaf;
  background: #fff;
}
table {
  width: 100%;
  border-collapse: separate;
  border-spacing: 0;
  table-layout: fixed;
}
.indicator {
  width: 15px;
}
th,
td {
  padding: 0 0 0 3px;
  text-align: left;
  font-weight: normal;
  white-space: nowrap;
}
thead th {
  height: 20px;
  border: solid #6f7277;
  border-width: 1px 1px 1px 0;
  background: linear-gradient(#fff, #d9dadf);
}
thead th:first-child {
  border-left-width: 1px;
}
tbody th {
  padding: 0 2px 0 4px;
  border: solid #6f7277;
  border-width: 0 1px;
  background: linear-gradient(90deg, #fff, #d9dadf);
}
.lines td {
  height: 21px;
  border-right: 1px solid #e2e2e2;
  border-bottom: 1px solid #e2e2e2;
  color: #0a7a12;
}
.lines .number {
  padding-right: 3px;
  text-align: right;
}
.lines .dots {
  padding: 0;
  text-align: center;
  font-weight: bold;
  color: #555;
}
.lines .chosen {
  position: relative;
  background: #7b96e0;
  color: #8dff8d;
}
.chosen::after {
  content: "";
  position: absolute;
  right: 4px;
  top: 9px;
  border: 3px solid transparent;
  border-top-color: #e8ecf8;
  border-bottom: 0;
}
.blank {
  flex: 1;
}
.totals {
  border: 1px solid #6f7277;
  background: linear-gradient(#fff, #d5d6db);
}
.totals td {
  height: 24px;
  padding: 0 1px 0 0;
}
.sum {
  height: 22px;
  border: 1px solid #a9acaf;
  background: linear-gradient(#fafafa, #ececee);
  line-height: 20px;
  text-align: right;
}
.navigator {
  display: flex;
  height: 18px;
}
.nav-buttons {
  display: flex;
  align-items: center;
  gap: 5px;
  width: 47px;
  padding-left: 2px;
  background: linear-gradient(#f1f1f2, #d2d3d5 50%, #c3c4c6 52%, #dcdcde);
}
.record {
  width: 75px;
  padding-left: 4px;
  line-height: 18px;
  white-space: nowrap;
}
.off {
  width: 45px;
  gap: 4px;
}
.scroll {
  display: flex;
  flex: 1;
  align-items: center;
  justify-content: space-between;
  padding: 0 5px;
  background: linear-gradient(#fafafa, #ebebec 50%, #f2f2f3);
}

/* amounts */
.summary {
  display: flex;
  flex-direction: column;
  align-items: flex-end;
  gap: 2px;
  padding: 16px 2px 0 0;
}
.sum-row {
  display: flex;
  align-items: center;
  height: 20px;
}
.amount {
  width: 112px;
  padding-right: 4px;
}
.pad {
  margin-right: 8px;
}
.taxable {
  width: 86px;
  margin-right: 5px;
  text-align: right;
  white-space: nowrap;
}
.short {
  width: 27px;
  margin-right: 5px;
  text-align: right;
}
.currency {
  width: 41px;
  margin-left: 5px;
}
.rate-label {
  width: 46px;
  margin-right: 5px;
  text-align: right;
}
.rate {
  width: 89px;
}
.rate select {
  padding-right: 20px;
  text-align-last: right;
}
.actions {
  display: flex;
  align-items: center;
  justify-content: space-between;
  height: 25px;
  margin-top: 7px;
  padding-right: 2px;
}
.actions .check {
  margin-left: -6px;
}
.pay {
  display: flex;
  gap: 4px;
}
.pay .push {
  height: 23px;
  white-space: nowrap;
}
.small {
  width: 46px;
}
.medium {
  width: 72px;
}
.large {
  width: 90px;
}
.regular {
  width: 60px;
}

/* shortcut bar */
.status {
  display: flex;
  gap: 9px;
  height: 20px;
  padding-left: 4px;
  border: 1px solid #6f7277;
  font-weight: bold;
  line-height: 17px;
}
</style>
